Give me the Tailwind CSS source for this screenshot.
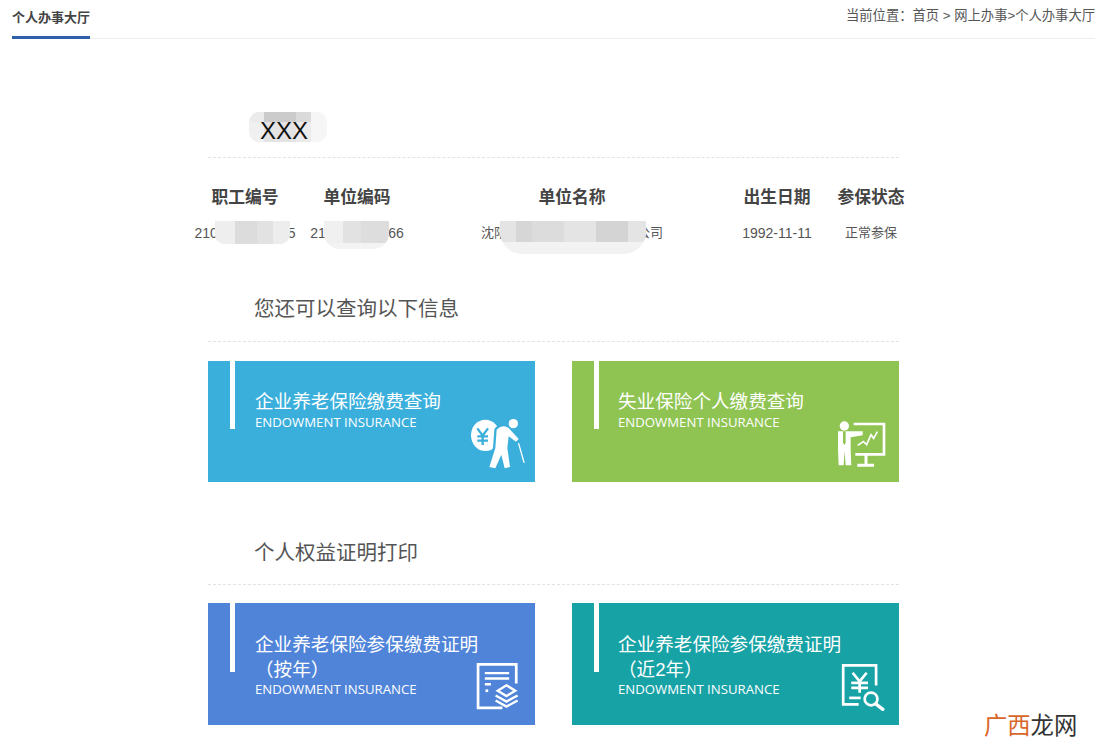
<!DOCTYPE html>
<html lang="zh-CN">
<head>
    <meta charset="UTF-8" />
    <title>个人办事大厅</title>
    <script src="https://cdn.jsdelivr.net/npm/@tailwindcss/browser@4"></script>
</head>
<body class="bg-white font-['Liberation_Sans','Noto_Sans_CJK_SC',sans-serif] text-[#444]">
<div class="relative w-[1113px] h-[755px] overflow-hidden">
    <!-- top bar -->
    <div class="flex justify-between ml-3 mr-[18px] h-[39px] border-b border-[#eeeeee]">
        <div class="h-[39px] w-[78px] border-b-[3px] border-[#2f5fa8] pt-[9px] text-[13px] leading-[18px] font-bold text-[#444] whitespace-nowrap">个人办事大厅</div>
        <div class="pt-[7px] text-[13.3px] leading-[18px] text-[#555] whitespace-nowrap">当前位置：首页 &gt; 网上办事&gt;个人办事大厅</div>
    </div>

    <div class="ml-[208px] w-[691px]">
        <!-- name -->
        <div class="relative h-[119px] border-b border-dashed border-[#e2e2e2]">
            <div class="absolute left-[41px] top-[73px] w-[78px] h-[30px] rounded-[10px] overflow-hidden grid grid-cols-[15px_32px_15px_16px] grid-rows-[10px_20px]">
                <div class="bg-[#ebebeb]"></div><div class="bg-[#cbcbcb]"></div><div class="bg-[#dadada]"></div><div class="bg-[#f6f6f6]"></div>
                <div class="bg-[#f0f0f0]"></div><div class="bg-[#e4e4e4]"></div><div class="bg-[#ebebeb]"></div><div class="bg-[#f6f6f6]"></div>
            </div>
            <div class="absolute left-[52px] top-[78px] text-[24px] leading-[28px] text-[#111]">XXX</div>
        </div>

        <!-- info table -->
        <div class="relative -ml-[18px] w-[728px] mt-[28px] grid grid-cols-[110px_114px_316px_94px_94px] text-center">
            <div class="text-[16.8px] leading-[24px] font-bold text-[#444]">职工编号</div>
            <div class="text-[16.8px] leading-[24px] font-bold text-[#444]">单位编码</div>
            <div class="text-[16.8px] leading-[24px] font-bold text-[#444]">单位名称</div>
            <div class="text-[16.8px] leading-[24px] font-bold text-[#444]">出生日期</div>
            <div class="text-[16.8px] leading-[24px] font-bold text-[#444]">参保状态</div>
            <div class="mt-[13px] text-[14px] leading-[20px] text-[#555] whitespace-nowrap">2100000000005</div>
            <div class="mt-[13px] text-[14px] leading-[20px] text-[#555] whitespace-nowrap">210000000066</div>
            <div class="mt-[13px] text-[13px] leading-[20px] text-[#555]">沈阳某某某某某某某某有限公司</div>
            <div class="mt-[13px] text-[14px] leading-[20px] text-[#555]">1992-11-11</div>
            <div class="mt-[13px] text-[13px] leading-[20px] text-[#555]">正常参保</div>
            <!-- mosaic over the numbers -->
            <div class="absolute left-[25px] top-[35px] w-[75px] h-[23px] rounded-b-[10px] overflow-hidden flex bg-[#e9e9e9]">
                <div class="w-[20px] bg-[#eeeeee]"></div><div class="w-[22px] bg-[#dcdcdc]"></div><div class="w-[16px] bg-[#e2e2e2]"></div><div class="w-[17px] bg-[#ededed]"></div>
            </div>
            <div class="absolute left-[134px] top-[35px] w-[65px] h-[28px] rounded-b-[16px] overflow-hidden bg-[#f3f3f3]">
                <div class="flex h-[22px]">
                    <div class="w-[19px] bg-[#f0f0f0]"></div><div class="w-[18px] bg-[#e2e2e2]"></div><div class="w-[28px] bg-[#dddddd]"></div>
                </div>
            </div>
            <div class="absolute left-[310px] top-[35px] w-[146px] h-[33px] rounded-b-[22px] overflow-hidden bg-[#f2f2f2]">
                <div class="flex h-[21px]">
                    <div class="w-[16px] bg-[#e4e4e4]"></div><div class="w-[16px] bg-[#d6d6d6]"></div><div class="w-[32px] bg-[#dcdcdc]"></div><div class="w-[32px] bg-[#e4e4e4]"></div><div class="w-[32px] bg-[#d4d4d4]"></div><div class="w-[18px] bg-[#e4e4e4]"></div>
                </div>
            </div>
        </div>

        <!-- query section -->
        <div class="h-[57px] mt-[42px] pl-[46px] pt-[9px] border-b border-dashed border-[#e2e2e2] text-[20.5px] leading-[30px] text-[#555]">您还可以查询以下信息</div>
        <div class="grid grid-cols-2 gap-x-[37px] mt-[19px]">
            <div class="relative h-[121px] bg-[#3bafdc] text-white">
                <div class="absolute left-[22px] top-0 w-[5px] h-[68px] bg-white"></div>
                <div class="pl-[47px] pt-[28px] text-[18.6px] leading-[26px]">企业养老保险缴费查询</div>
                <div class="pl-[47px] -mt-[1px] text-[13.2px] leading-[16px] font-['Open_Sans',sans-serif]">ENDOWMENT INSURANCE</div>
                <svg class="absolute left-[262px] top-[58px] w-[56px] h-[52px]" viewBox="92 118 168 156" fill="none" stroke-linecap="round" stroke-linejoin="round">
                    <ellipse cx="138" cy="167" rx="43" ry="47" fill="#fff"/>
                    <path d="M172 150 Q190 132 208 145 L238 178 L230 186 L208 170 L204 205 L212 262 L196 266 L186 225 L168 266 L150 262 L168 205 Z" fill="#3bafdc" stroke="#3bafdc" stroke-width="14"/>
                    <path d="M114 146 L130 168 L146 146 M130 168 V196 M114 170 H146 M114 183 H146" stroke="#3bafdc" stroke-width="7" stroke-linecap="butt"/>
                    <circle cx="222" cy="132" r="14" fill="#fff"/>
                    <path d="M172 150 Q190 132 208 145 L238 178 L230 186 L208 170 L204 205 L212 262 L196 266 L186 225 L168 266 L150 262 L168 205 Z" fill="#fff"/>
                    <path d="M238 192 L254 248" stroke="#fff" stroke-width="4"/>
                </svg>
            </div>
            <div class="relative h-[121px] bg-[#8fc453] text-white">
                <div class="absolute left-[22px] top-0 w-[5px] h-[68px] bg-white"></div>
                <div class="pl-[46px] pt-[28px] text-[18.6px] leading-[26px]">失业保险个人缴费查询</div>
                <div class="pl-[46px] -mt-[1px] text-[13.2px] leading-[16px] font-['Open_Sans',sans-serif]">ENDOWMENT INSURANCE</div>
                <svg class="absolute left-[265px] top-[60px] w-[50px] h-[47px]" viewBox="85 65 150 141" fill="none">
                    <path d="M135 74 H226 V165 H140" stroke="#fff" stroke-width="8"/>
                    <path d="M172 165 V196 M146 198 H196" stroke="#fff" stroke-width="9"/>
                    <path d="M147 138 L164 127 L174 136 L187 106 L195 117 L206 97" stroke="#fff" stroke-width="5"/>
                    <circle cx="107" cy="80" r="14" fill="#fff"/>
                    <path d="M88 96 H128 L162 96 V108 L126 114 V150 L128 198 H111 L108 155 L105 198 H90 L88 150 Z" fill="#fff"/>
                    <path d="M103 96 H111 L111 130 L107 137 L103 130 Z" fill="#8fc453"/>
                </svg>
            </div>
        </div>

        <!-- certificate section -->
        <div class="h-[62px] mt-[41px] pl-[46px] pt-[15px] border-b border-dashed border-[#e2e2e2] text-[20.5px] leading-[30px] text-[#555]">个人权益证明打印</div>
        <div class="grid grid-cols-2 gap-x-[37px] mt-[18px]">
            <div class="relative h-[122px] bg-[#4f84d9] text-white">
                <div class="absolute left-[22px] top-0 w-[5px] h-[69px] bg-white"></div>
                <div class="pl-[47px] pt-[29px] text-[18.6px] leading-[25px]">企业养老保险参保缴费证明<br />（按年）</div>
                <div class="pl-[47px] -mt-[1px] text-[13.2px] leading-[16px] font-['Open_Sans',sans-serif]">ENDOWMENT INSURANCE</div>
                <svg class="absolute left-[268px] top-[60px] w-[44px] h-[48px]" viewBox="82 44 130 142" fill="none">
                    <path d="M160 177 H88 V48 H201 V105" stroke="#fff" stroke-width="8"/>
                    <path d="M108 74 H180 M108 90 H180 M108 107 H126" stroke="#fff" stroke-width="7"/>
                    <path d="M110 126 H118" stroke="#fff" stroke-width="8"/>
                    <path d="M172 110 L198 126 L172 142 L146 126 Z" stroke="#fff" stroke-width="7"/>
                    <path d="M140 140 L172 158 L205 140 M140 155 L172 173 L205 155" stroke="#fff" stroke-width="7"/>
                </svg>
            </div>
            <div class="relative h-[122px] bg-[#17a2a6] text-white">
                <div class="absolute left-[22px] top-0 w-[5px] h-[69px] bg-white"></div>
                <div class="pl-[46px] pt-[29px] text-[18.6px] leading-[25px]">企业养老保险参保缴费证明<br />（近2年）</div>
                <div class="pl-[46px] -mt-[1px] text-[13.2px] leading-[16px] font-['Open_Sans',sans-serif]">ENDOWMENT INSURANCE</div>
                <svg class="absolute left-[269px] top-[61px] w-[44px] h-[47px]" viewBox="66 44 130 140" fill="none">
                    <path d="M118 164 H72 V48 H170 V108" stroke="#fff" stroke-width="8"/>
                    <path d="M100 70 L121 96 L142 70 M121 96 V130 M96 100 H146 M96 115 H146" stroke="#fff" stroke-width="8"/>
                    <path d="M90 145 H124" stroke="#fff" stroke-width="8"/>
                    <circle cx="155" cy="148" r="19" stroke="#fff" stroke-width="8"/>
                    <path d="M169 163 L190 179" stroke="#fff" stroke-width="10" stroke-linecap="round"/>
                </svg>
            </div>
        </div>
    </div>

    <!-- watermark -->
    <div class="absolute left-[984px] top-[711px] text-[23.3px] leading-[30px] whitespace-nowrap text-[#333]"><span class="text-[#d9662a]">广西</span>龙网</div>
</div>
</body>
</html>
